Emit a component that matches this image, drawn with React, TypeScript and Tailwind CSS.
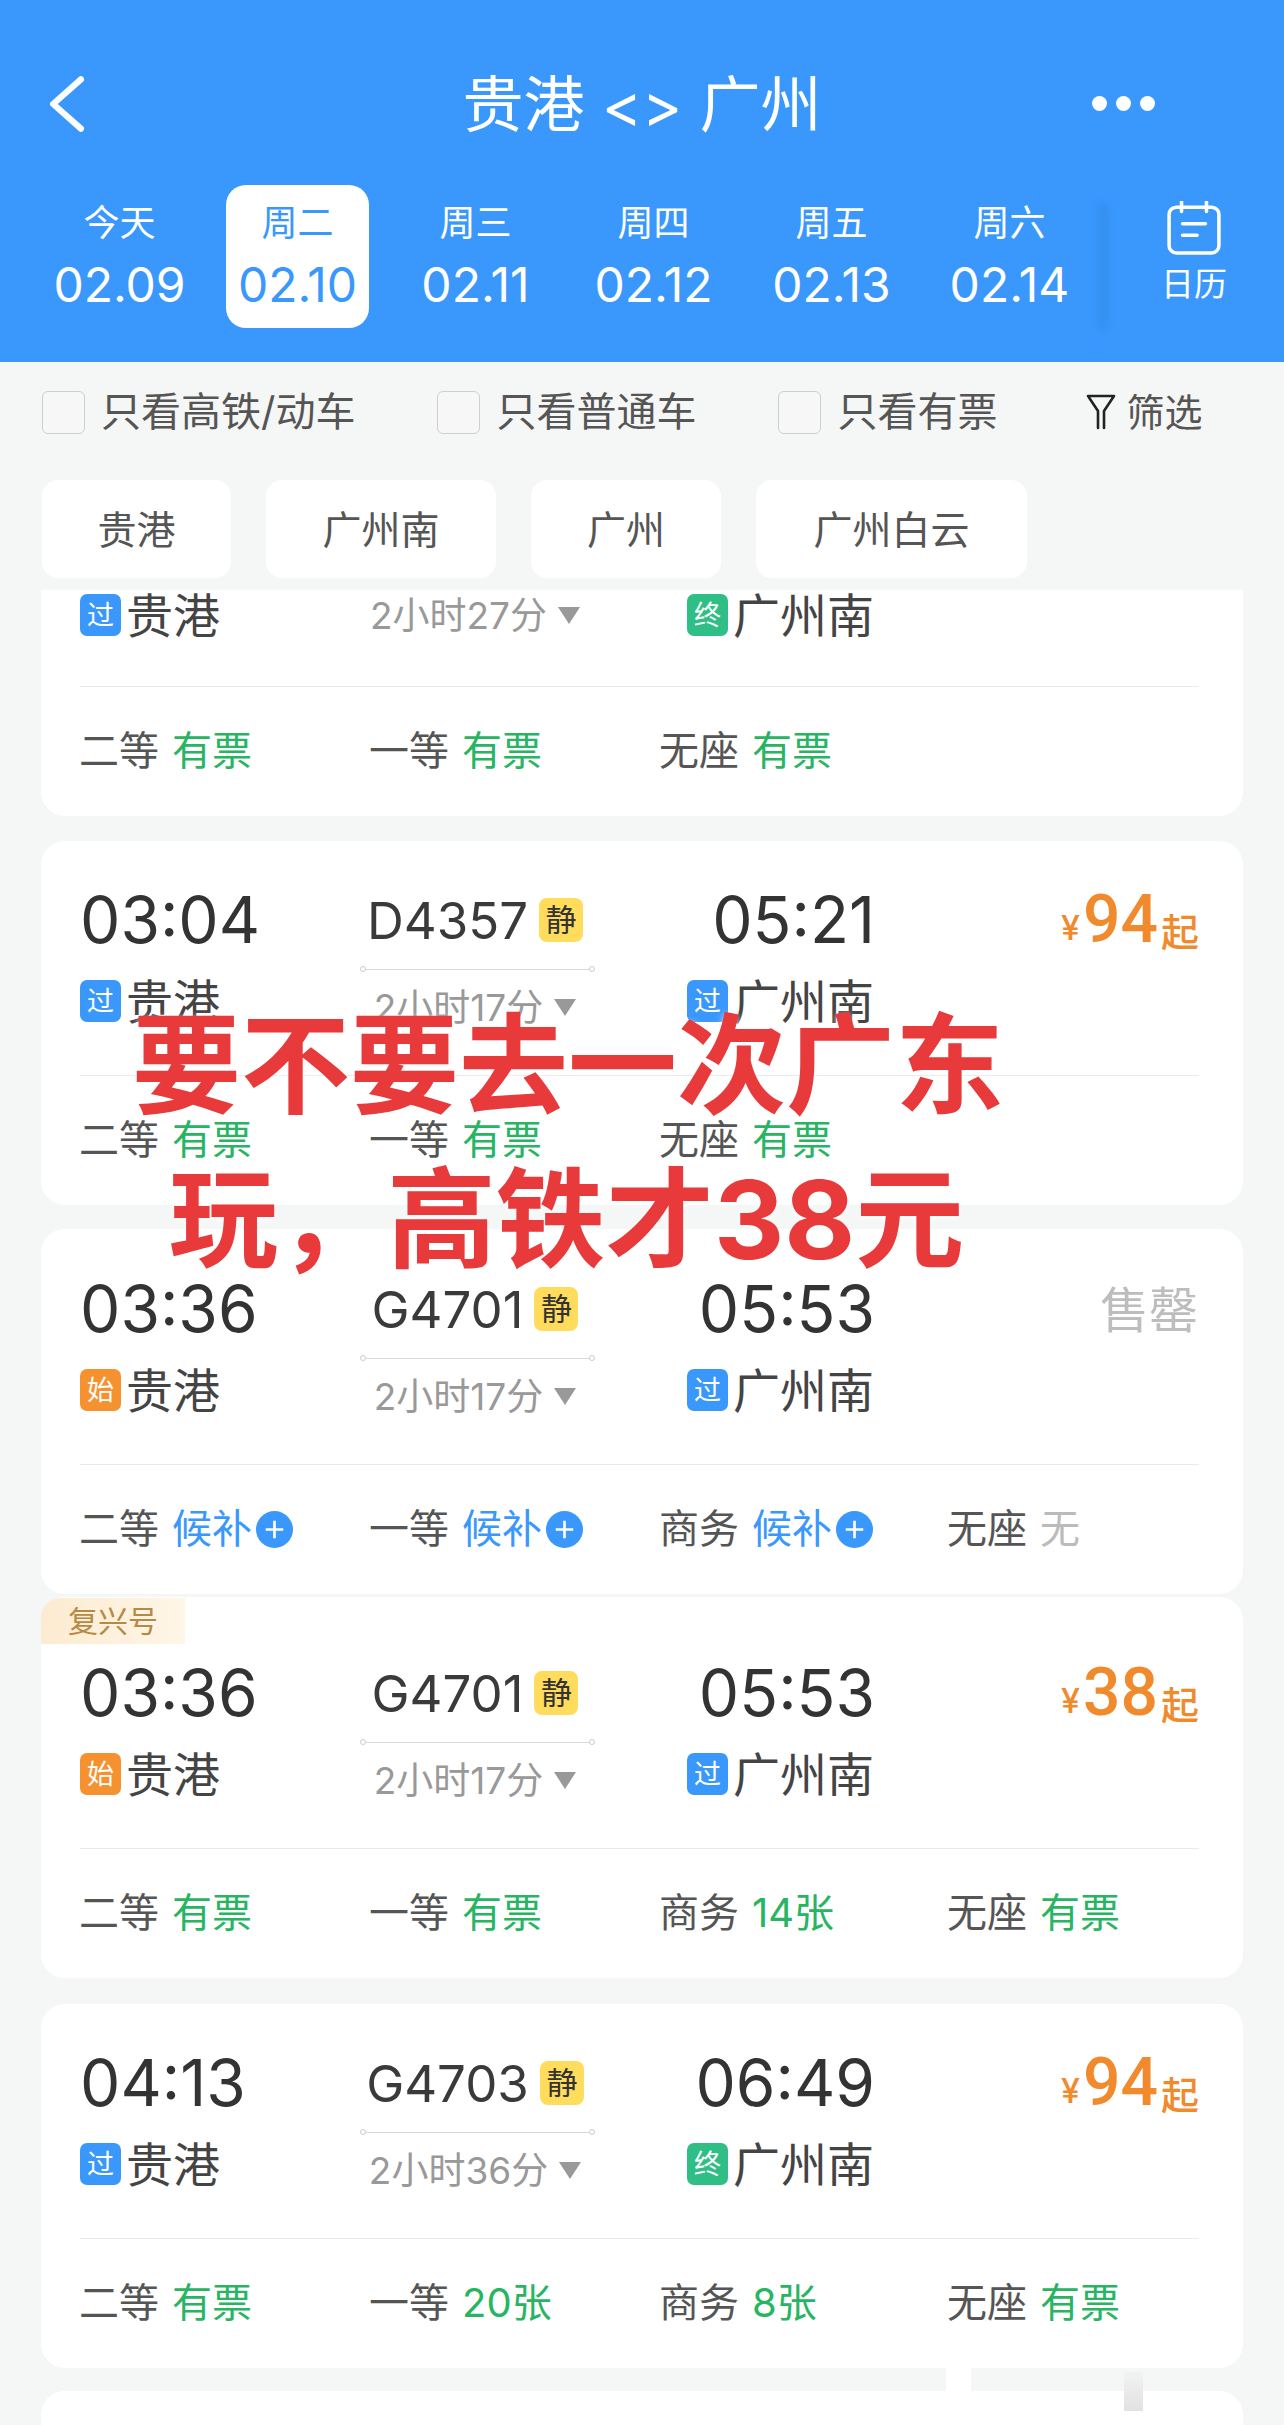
const fontStack = { fontFamily: 'Inter, "Noto Sans CJK SC", sans-serif' };

type Seat = { label: string; value: string; tone: 'green' | 'blue' | 'gray' };

type TagKind = '过' | '始' | '终';

interface Train {
  depart: string;
  arrive: string;
  no: string;
  duration: string;
  fromTag: TagKind;
  toTag: TagKind;
  price?: string;
  seats: Seat[];
  className: string;
  fuxing?: boolean;
}

const tagColors: Record<TagKind, string> = {
  过: 'bg-[#3A98FD]',
  始: 'bg-[#F5922F]',
  终: 'bg-[#2FBF86]',
};

const days = [
  ['今天', '02.09'],
  ['周二', '02.10'],
  ['周三', '02.11'],
  ['周四', '02.12'],
  ['周五', '02.13'],
  ['周六', '02.14'],
];

const green = (label: string, value = '有票'): Seat => ({ label, value, tone: 'green' });
const blue = (label: string): Seat => ({ label, value: '候补', tone: 'blue' });

const trains: Train[] = [
  {
    depart: '03:04',
    arrive: '05:21',
    no: 'D4357',
    duration: '2小时17分',
    fromTag: '过',
    toTag: '过',
    price: '94',
    seats: [green('二等'), green('一等'), green('无座')],
    className: 'mt-[25px] pt-[44px]',
  },
  {
    depart: '03:36',
    arrive: '05:53',
    no: 'G4701',
    duration: '2小时17分',
    fromTag: '始',
    toTag: '过',
    seats: [blue('二等'), blue('一等'), blue('商务'), { label: '无座', value: '无', tone: 'gray' }],
    className: 'mt-[24px] pt-[45px]',
  },
  {
    depart: '03:36',
    arrive: '05:53',
    no: 'G4701',
    duration: '2小时17分',
    fromTag: '始',
    toTag: '过',
    price: '38',
    seats: [green('二等'), green('一等'), green('商务', '14张'), green('无座')],
    className: 'mt-[3px] pt-[61px]',
    fuxing: true,
  },
  {
    depart: '04:13',
    arrive: '06:49',
    no: 'G4703',
    duration: '2小时36分',
    fromTag: '过',
    toTag: '终',
    price: '94',
    seats: [green('二等'), green('一等', '20张'), green('商务', '8张'), green('无座')],
    className: 'mt-[26px] pt-[44px]',
  },
];

const Tag = ({ kind }: { kind: TagKind }) => (
  <span className={`flex h-[42px] w-[41px] shrink-0 items-center justify-center rounded-[7px] text-[27px] text-white ${tagColors[kind]}`}>
    {kind}
  </span>
);

const Station = ({ kind, name }: { kind: TagKind; name: string }) => (
  <div className="flex h-[46px] items-center gap-[5px] text-[47px] leading-none text-[#444]">
    <Tag kind={kind} />
    <span>{name}</span>
  </div>
);

const SeatRow = ({ seats }: { seats: Seat[] }) => (
  <div className="-ml-px mt-[40px] grid h-[48px] grid-cols-[290px_290px_288px_1fr] items-center text-[40px] leading-none">
    {seats.map((seat, i) => (
      <div key={i} className="flex items-center">
        <span className="text-[#555]">{seat.label}</span>
        <span
          className={`ml-[13px] ${
            seat.tone === 'green' ? 'text-[#27B562]' : seat.tone === 'blue' ? 'text-[#3A98FD]' : 'text-[#BBB]'
          }`}
        >
          {seat.value}
        </span>
        {seat.tone === 'blue' && (
          <svg viewBox="0 0 36 36" className="ml-[4px] h-[37px] w-[37px]">
            <circle cx="18" cy="18" r="18" fill="#3A98FD" />
            <path d="M18 9.5v17M9.5 18h17" stroke="#fff" strokeWidth="2.6" />
          </svg>
        )}
      </div>
    ))}
  </div>
);

const Duration = ({ text }: { text: string }) => (
  <div className="flex h-[40px] items-center justify-center gap-[11px] pr-[5px] text-[37px] leading-none text-[#999]">
    <span>{text}</span>
    <span className="h-0 w-0 border-x-[11px] border-t-[17px] border-x-transparent border-t-[#999]" />
  </div>
);

const TrainCard = ({ train }: { train: Train }) => (
  <div className={`relative mx-[41px] rounded-[24px] bg-white pb-[41px] pl-[39px] pr-[44px] ${train.className}`}>
    {train.fuxing && (
      <div className="absolute left-0 top-[1px] flex h-[46px] w-[144px] items-center justify-center rounded-tl-[20px] bg-gradient-to-r from-[#FCEBD0] to-[#FFF6E8] text-[30px] text-[#B58A45]">
        复兴号
      </div>
    )}
    <div className="flex h-[139px]">
      <div className="w-[280px]">
        <div className="flex h-[70px] items-center text-[64px] leading-none text-[#333]">{train.depart}</div>
        <div className="mt-[23px]">
          <Station kind={train.fromTag} name="贵港" />
        </div>
      </div>
      <div className="w-[235px]">
        <div className="flex h-[70px] items-center justify-center gap-[11px] pr-[5px]">
          <span className="text-[51px] leading-none text-[#3A3A3A]">{train.no}</span>
          <span className="flex h-[44px] w-[44px] items-center justify-center rounded-[8px] bg-[#FFDC5C] text-[31px] text-[#333]">静</span>
        </div>
        <div className="mt-[11px] flex items-center">
          <span className="h-[6px] w-[6px] rounded-full border border-[#CCC]" />
          <span className="h-px flex-1 bg-[#D8D8D8]" />
          <span className="h-[6px] w-[6px] rounded-full border border-[#CCC]" />
        </div>
        <div className="mt-[15px]">
          <Duration text={train.duration} />
        </div>
      </div>
      <div className="flex w-[279px] flex-col items-end">
        <div className="-mr-[1px] flex h-[70px] items-center text-[64px] leading-none text-[#333]">{train.arrive}</div>
        <div className="mt-[23px]">
          <Station kind={train.toTag} name="广州南" />
        </div>
      </div>
      <div className="flex h-[70px] flex-1 items-center justify-end">
        {train.price ? (
          <div className="flex items-end leading-none text-[#F08A2C]">
            <span className="mb-[8px] text-[34px] font-medium">¥</span>
            <span className="ml-[3px] font-[Roboto] text-[66px] font-medium">{train.price}</span>
            <span className="mb-[2px] ml-[3px] text-[38px] font-medium">起</span>
          </div>
        ) : (
          <span className="mt-[3px] pr-[1px] text-[49px] leading-none text-[#BDBDBD]">售罄</span>
        )}
      </div>
    </div>
    <div className="mt-[51px] h-px bg-[#EAEAEA]" />
    <SeatRow seats={train.seats} />
  </div>
);

const Header = () => (
  <div className="bg-[#3A98FD] pb-[32px] pt-[75px] text-white">
    <div className="grid h-[60px] grid-cols-[1fr_auto_1fr] items-center">
      <div className="pl-[48px]">
        <svg viewBox="0 0 36 56" className="-mt-[4px] h-[58px] w-[37px]" fill="none" stroke="#fff" strokeWidth="6" strokeLinecap="round" strokeLinejoin="round">
          <path d="M32 4 5 28l27 24" />
        </svg>
      </div>
      <div className="text-[61px] leading-none">贵港 &lt;&gt; 广州</div>
      <div className="-mt-[4px] flex justify-end gap-[9px] pr-[129px]">
        <span className="h-[15px] w-[15px] rounded-full bg-white" />
        <span className="h-[15px] w-[15px] rounded-full bg-white" />
        <span className="h-[15px] w-[15px] rounded-full bg-white" />
      </div>
    </div>
    <div className="mt-[50px] flex pl-[48px]">
      <div className="flex gap-[35px]">
        {days.map(([label, date], i) => (
          <div
            key={date}
            className={`flex h-[143px] w-[143px] flex-col items-center rounded-[20px] pt-[17px] ${i === 1 ? 'bg-white text-[#3A98FD]' : ''}`}
          >
            <span className="text-[36px] leading-[42px]">{label}</span>
            <span className="mt-[15px] text-[48px] leading-[52px]">{date}</span>
          </div>
        ))}
      </div>
      <div className="ml-[16px] mt-[18px] h-[127px] w-[12px] bg-[#3590F2] blur-[3px]" />
      <div className="ml-[52px] flex w-[66px] flex-col items-center pt-[16px]">
        <svg viewBox="0 0 52 52" className="h-[54px] w-[54px]" fill="none" stroke="#fff" strokeWidth="3.4" strokeLinecap="round">
          <rect x="2" y="6" width="48" height="44" rx="7" />
          <path d="M14 1v9M38 1v9M15 22h22M15 33h14" />
        </svg>
        <span className="mt-[10px] whitespace-nowrap text-[33px] leading-[38px]">日历</span>
      </div>
    </div>
  </div>
);

const Check = ({ text }: { text: string }) => (
  <div className="flex items-center gap-[16px]">
    <span className="h-[43px] w-[43px] rounded-[6px] border border-[#CFCFCF] bg-[#F7F7F7]" />
    <span>{text}</span>
  </div>
);

const Filters = () => (
  <div className="ml-[42px] mt-[24px] flex h-[52px] items-center gap-[82px] text-[40px] leading-none text-[#555]">
    <Check text="只看高铁/动车" />
    <Check text="只看普通车" />
    <Check text="只看有票" />
    <div className="ml-[7px] flex items-center gap-[10px] text-[38px]">
      <svg viewBox="0 0 30 36" className="h-[36px] w-[30px]" fill="none" stroke="#222" strokeWidth="2.6" strokeLinejoin="round" strokeLinecap="round">
        <path d="M2 2h26L18 17v17M12 34V17L2 2" />
      </svg>
      <span>筛选</span>
    </div>
  </div>
);

const Chips = () => (
  <div className="ml-[42px] mt-[42px] flex gap-[35px] text-[39px] leading-none text-[#555]">
    {[
      ['贵港', 'w-[189px]'],
      ['广州南', 'w-[230px]'],
      ['广州', 'w-[190px]'],
      ['广州白云', 'w-[271px]'],
    ].map(([name, width]) => (
      <div key={name} className={`flex h-[98px] items-center justify-center rounded-[16px] bg-white ${width}`}>
        {name}
      </div>
    ))}
  </div>
);

export default function App() {
  return (
    <div className="relative h-[2425px] w-[1284px] overflow-hidden bg-[#F5F6F6]" style={fontStack}>
      <Header />
      <Filters />
      <Chips />
      {/* first card is scrolled under the chips, only its lower part shows */}
      <div className="mx-[41px] mt-[12px] rounded-b-[24px] bg-white pb-[41px] pl-[39px] pr-[44px] pt-[2px]">
        <div className="flex">
          <div className="w-[280px]">
            <Station kind="过" name="贵港" />
          </div>
          <div className="w-[235px] pt-[3px]">
            <Duration text="2小时27分" />
          </div>
          <div className="flex w-[279px] justify-end">
            <Station kind="终" name="广州南" />
          </div>
        </div>
        <div className="mt-[48px] h-px bg-[#EAEAEA]" />
        <SeatRow seats={[green('二等'), green('一等'), green('无座')]} />
      </div>
      {trains.map((train, i) => (
        <TrainCard key={i} train={train} />
      ))}
      <div className="mx-[41px] mt-[23px] h-[200px] rounded-t-[24px] bg-white" />

      {/* faint smudges left at the bottom of the screenshot */}
      <div className="absolute left-[946px] top-[2367px] h-[44px] w-[25px] rounded-b-[8px] bg-white" />
      <div className="absolute left-[1124px] top-[2372px] h-[39px] w-[19px] bg-gradient-to-b from-[#F2F2F2] to-[#E2E2E2]" />

      {/* caption burnt over the screenshot */}
      <div className="absolute left-[132px] top-[1011px] text-[109px] font-bold leading-none text-[#E8393B] [text-shadow:0_2px_6px_rgba(255,255,255,0.8)]">
        要不要去一次广东
      </div>
      <div className="absolute left-[169px] top-[1165px] text-[109px] font-bold leading-none text-[#E8393B] [text-shadow:0_2px_6px_rgba(255,255,255,0.8)]">
        玩，高铁才38元
      </div>
    </div>
  );
}
